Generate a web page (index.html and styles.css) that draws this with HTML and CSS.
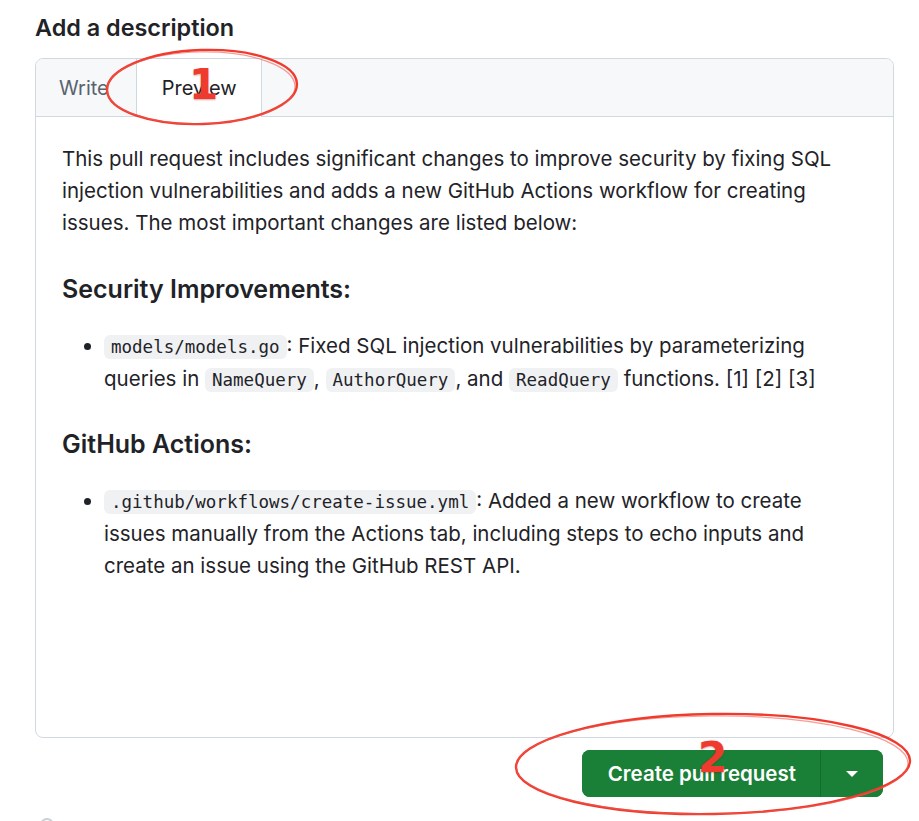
FILE: index.html
```html
<!DOCTYPE html>
<html lang="en">
<head>
<meta charset="utf-8">
<title>Add a description</title>
<link rel="stylesheet" href="styles.css">
</head>
<body>
<div class="page">
  <h2 class="title">Add a description</h2>
  <div class="editor">
    <div class="tabs">
      <button class="tab">Write</button>
      <button class="tab active">Preview</button>
    </div>
    <div class="preview">
      <p>This pull request includes significant changes to improve security by fixing SQL injection vulnerabilities and adds a new GitHub Actions workflow for creating issues. The most important changes are listed below:</p>
      <h3>Security Improvements:</h3>
      <ul>
        <li><code>models/models.go</code>: Fixed SQL injection vulnerabilities by parameterizing queries in <code>NameQuery</code>, <code>AuthorQuery</code>, and <code>ReadQuery</code> functions. <a>[1]</a> <a>[2]</a> <a>[3]</a></li>
      </ul>
      <h3>GitHub Actions:</h3>
      <ul>
        <li><code>.github/workflows/create-issue.yml</code>: Added a new workflow to create issues manually from the Actions tab, including steps to echo inputs and create an issue using the GitHub REST API.</li>
      </ul>
    </div>
  </div>
  <div class="actions">
    <div class="btn-group">
      <button class="btn-main">Create pull request</button>
      <button class="btn-caret" aria-label="More options">
        <svg width="14" height="8" viewBox="0 0 14 8"><path d="M1 1h12L7 7z" fill="#fff"/></svg>
      </button>
    </div>
  </div>
  <div class="below"></div>

  <svg class="annot annot-1" width="210" height="90" viewBox="0 0 210 90">
    <ellipse cx="105" cy="45" rx="95" ry="37" transform="rotate(-2 105 45)" fill="none" stroke="#ef3a2e" stroke-width="2.4"/>
    <ellipse cx="104" cy="46" rx="94" ry="36" transform="rotate(-1 104 46)" fill="none" stroke="#f05a4e" stroke-width="1.2" opacity="0.6"/>
  </svg>
  <span class="mark mark-1">1</span>

  <svg class="annot annot-2" width="410" height="115" viewBox="0 0 410 115">
    <ellipse cx="205" cy="57" rx="197" ry="50" transform="rotate(-1 205 57)" fill="none" stroke="#ef3a2e" stroke-width="2.4"/>
    <ellipse cx="204" cy="58" rx="196" ry="49" transform="rotate(-0.5 204 58)" fill="none" stroke="#f05a4e" stroke-width="1.2" opacity="0.6"/>
  </svg>
  <span class="mark mark-2">2</span>
</div>
</body>
</html>
```
FILE: styles.css
```css
* { box-sizing: border-box; }
html, body { margin: 0; padding: 0; background: #fff; }
body {
  font-family: Inter, "Noto Sans", "Liberation Sans", sans-serif;
  color: #1f2328;
}
.page {
  position: relative;
  width: 919px;
  height: 821px;
  overflow: hidden;
  padding: 13px 25px 0 35px;
}
.title {
  margin: 0 0 15px;
  font-size: 23.4px;
  line-height: 30px;
  font-weight: 600;
  color: #1f2328;
}
.editor {
  border: 1px solid #d1d9e0;
  border-radius: 8px;
  height: 680px;
  overflow: hidden;
}
.tabs {
  display: flex;
  height: 58px;
  background: #f6f8fa;
  border-bottom: 1px solid #d1d9e0;
}
.tab {
  font: inherit;
  font-size: 20px;
  background: transparent;
  border: 0;
  padding: 0 26px 0 22px;
  height: 58px;
  color: #59636e;
  border-right: 1px solid transparent;
  border-left: 1px solid transparent;
}
.tab.active {
  background: #fff;
  color: #1f2328;
  border-left-color: #d1d9e0;
  border-right-color: #d1d9e0;
  padding: 0 24px 0 25px;
}
.preview {
  padding: 26px 26px;
  font-size: 20.5px;
  line-height: 32px;
  color: #1f2328;
}
.preview p { margin: 0; }
.preview h3 {
  margin: 34px 0 24px;
  font-size: 25px;
  line-height: 33px;
  font-weight: 600;
}
.preview ul + h3 { margin-top: 32px; }
.preview ul {
  margin: 0;
  padding-left: 42px;
}
.preview code {
  font-family: "DejaVu Sans Mono", "Liberation Mono", monospace;
  font-size: 17.5px;
  background: #eff1f3;
  border-radius: 6px;
  padding: 2px 7px;
}
.actions {
  display: flex;
  justify-content: flex-end;
  padding-top: 12px;
  padding-right: 11px;
}
.btn-group {
  display: flex;
  height: 47px;
  border-radius: 8px;
  overflow: hidden;
  background: #1a7f37;
}
.btn-main, .btn-caret {
  font: inherit;
  border: 0;
  background: #1a7f37;
  color: #fff;
  height: 47px;
}
.btn-main {
  font-size: 20.5px;
  font-weight: 600;
  padding: 0 24px 0 26px;
  border-right: 1px solid #136b2e;
}
.btn-caret {
  width: 62px;
  display: flex;
  align-items: center;
  justify-content: center;
  padding: 0;
}
.below {
  position: absolute;
  left: 40px;
  top: 818px;
  width: 14px;
  height: 14px;
  border-radius: 50%;
  border: 2px solid #8c959f;
  opacity: 0.45;
}
.annot { position: absolute; pointer-events: none; }
.annot-1 { left: 97px; top: 42px; }
.annot-2 { left: 508px; top: 707px; }
.mark {
  position: absolute;
  font-family: "DejaVu Sans", sans-serif;
  font-weight: 700;
  color: #ef3a2e;
  line-height: 1;
  text-shadow: 0 1px 2px rgba(150,0,0,0.35);
}
.mark-1 { left: 189px; top: 64px; font-size: 42px; }
.mark-2 { left: 698px; top: 737px; font-size: 42px; }
```
